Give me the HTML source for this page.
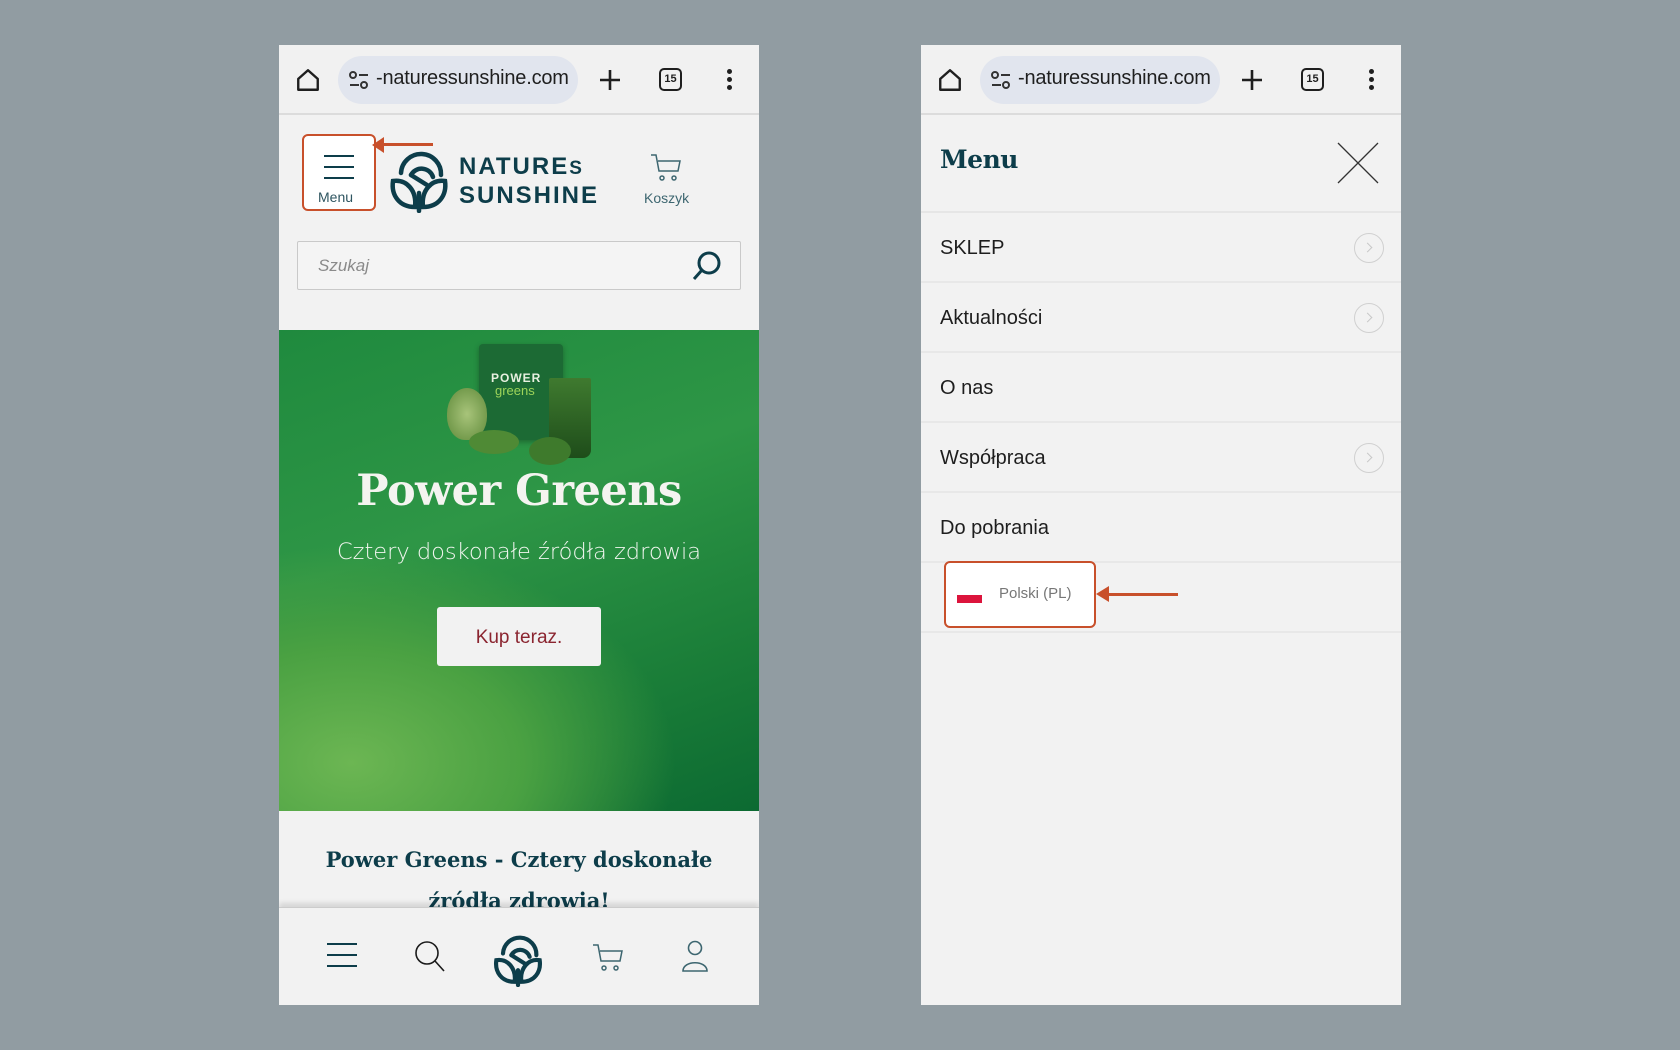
<!DOCTYPE html>
<html><head><meta charset="utf-8">
<style>
*{margin:0;padding:0;box-sizing:border-box}
body{width:1680px;height:1050px;background:#919ca2;position:relative;overflow:hidden;font-family:"Liberation Sans",sans-serif}
.ph{position:absolute;top:45px;width:480px;height:960px;background:#f2f2f2;overflow:hidden}
.abs{position:absolute}
.bar{position:absolute;left:0;top:0;width:480px;height:70px;background:#f1f1f1;border-bottom:2px solid #dcdcdc}
.pill{position:absolute;left:59px;top:11px;width:240px;height:48px;border-radius:24px;background:#e1e5ee}
.url{position:absolute;left:97px;top:22px;font-size:20px;color:#1f1f1f;letter-spacing:-0.2px}
.serif{font-family:"DejaVu Serif","Liberation Serif",serif}
.row{position:absolute;left:0;width:480px;height:70px;border-bottom:2px solid #e8e8e8}
.row span{position:absolute;left:19px;top:24px;font-size:20px;color:#1e1e1e}
.chev{position:absolute;right:17px;top:20px;width:30px;height:30px;border:1.5px solid #d0d0d0;border-radius:50%}
.chev:after{content:"";position:absolute;left:9px;top:10px;width:6px;height:6px;border-right:1px solid #c8c8c8;border-top:1px solid #c8c8c8;transform:rotate(45deg)}
</style></head><body>

<!-- LEFT PHONE -->
<div class="ph" style="left:279px">
 <div class="bar">
  <svg class="abs" style="left:16px;top:22px" width="26" height="26" viewBox="0 0 24 24"><path d="M3 11 L12 3 L21 11 V21 H3 Z" fill="none" stroke="#1f1f1f" stroke-width="2.2" stroke-linejoin="round"/></svg>
  <div class="pill"></div>
  <svg class="abs" style="left:69px;top:26px" width="22" height="18" viewBox="0 0 22 18"><circle cx="5" cy="4" r="3" fill="none" stroke="#333" stroke-width="2"/><line x1="11" y1="4" x2="20" y2="4" stroke="#333" stroke-width="2"/><line x1="2" y1="14" x2="11" y2="14" stroke="#333" stroke-width="2"/><circle cx="16" cy="14" r="3" fill="none" stroke="#333" stroke-width="2"/></svg>
  <div class="url">-naturessunshine.com</div>
  <svg class="abs" style="left:319px;top:23px" width="24" height="24" viewBox="0 0 24 24"><path d="M12 2V22M2 12H22" stroke="#1f1f1f" stroke-width="2.6"/></svg>
  <div class="abs" style="left:380px;top:23px;width:23px;height:23px;border:2.4px solid #1f1f1f;border-radius:5px;font-size:11px;font-weight:bold;text-align:center;line-height:18px;color:#1f1f1f">15</div>
  <div class="abs" style="left:448px;top:24px;width:5px;height:5px;border-radius:50%;background:#1f1f1f;box-shadow:0 8px 0 #1f1f1f,0 16px 0 #1f1f1f"></div>
 </div>
 <div class="abs" style="left:23px;top:89px;width:74px;height:77px;border:2.5px solid #c8502b;border-radius:6px;background:#fff"></div>
 <div class="abs" style="left:45px;top:110px;width:30px;height:2px;background:#0d3d4a;box-shadow:0 11px 0 #0d3d4a,0 22px 0 #0d3d4a"></div>
 <div class="abs" style="left:39px;top:144px;font-size:14px;color:#2e5560">Menu</div>
 <div class="abs" style="left:104px;top:98px;width:50px;height:3px;background:#c8502b"></div>
 <div class="abs" style="left:93px;top:92px;width:0;height:0;border-top:8px solid transparent;border-bottom:8px solid transparent;border-right:12px solid #c8502b"></div>
 <svg class="abs" style="left:110px;top:106px" width="60" height="62" viewBox="0 0 60 62" fill="none" stroke="#0d3d4a" stroke-width="4.5" stroke-linecap="round">
  <path d="M12 22 A20 20 0 0 1 52 24"/><path d="M22 24 A12 12 0 0 1 44 26"/><path d="M22 24 L38 34"/>
  <path d="M4 30 C18 28 28 40 26 56 C10 56 2 44 4 30Z"/><path d="M56 30 C42 28 32 40 34 56 C50 56 58 44 56 30Z"/><path d="M30 42 V60"/>
 </svg>
 <div class="abs" style="left:180px;top:108px;font-size:24px;font-weight:bold;color:#0d3d4a;letter-spacing:2px;line-height:27px">NATURE<span style="font-size:19px">S</span><br>SUNSHINE</div>
 <svg class="abs" style="left:371px;top:108px" width="32" height="30" viewBox="0 0 32 30" fill="none" stroke="#3d6670" stroke-width="1.5"><path d="M1 2H6L9 18H28L30 8H8"/><circle cx="12" cy="25" r="2"/><circle cx="24" cy="25" r="2"/></svg>
 <div class="abs" style="left:365px;top:145px;font-size:14px;color:#3d6670">Koszyk</div>
 <div class="abs" style="left:18px;top:196px;width:444px;height:49px;border:1.5px solid #c9c9c9;border-radius:2px;background:#f4f4f4"></div>
 <div class="abs" style="left:39px;top:211px;font-size:17px;font-style:italic;color:#8a8a8a">Szukaj</div>
 <svg class="abs" style="left:412px;top:205px" width="32" height="32" viewBox="0 0 32 32" fill="none" stroke="#0d3d4a" stroke-width="3"><circle cx="18" cy="13" r="10"/><path d="M11 20L3 29"/></svg>
 <div class="abs" style="left:0;top:285px;width:480px;height:481px;background:radial-gradient(ellipse 90% 60% at 15% 90%,#6cb653 0%,#4aa142 40%,rgba(40,140,60,0) 75%),linear-gradient(160deg,#1f8a3e 0%,#2e9646 40%,#1a7d38 75%,#0c6a32 100%)"></div>
 <div class="abs" style="left:200px;top:299px;width:84px;height:96px;background:#1c6a34;border-radius:4px;box-shadow:0 2px 6px rgba(0,0,0,.3)"></div>
 <div class="abs" style="left:212px;top:326px;font-size:12px;font-weight:bold;color:#e8f0e0;letter-spacing:1px">POWER</div>
 <div class="abs" style="left:216px;top:338px;font-size:13px;color:#9ed45a">greens</div>
 <div class="abs" style="left:270px;top:333px;width:42px;height:80px;background:linear-gradient(#3f7a2f,#1e4d1a);border-radius:2px 2px 8px 8px"></div>
 <div class="abs" style="left:168px;top:343px;width:40px;height:52px;background:radial-gradient(#a8c47a,#5f8a3a);border-radius:50% 50% 45% 45%"></div>
 <div class="abs" style="left:190px;top:385px;width:50px;height:24px;background:#4f8a35;border-radius:50%"></div>
 <div class="abs" style="left:250px;top:392px;width:42px;height:28px;background:#3e7a2c;border-radius:50%"></div>
 <div class="abs serif" style="left:0;top:421px;width:480px;text-align:center;font-size:43px;font-weight:bold;color:#f4f4f0;letter-spacing:-0.5px">Power Greens</div>
 <div class="abs" style="left:0;top:494px;width:480px;text-align:center;font-size:22.5px;color:#f0f5ee;font-family:'DejaVu Sans',sans-serif;font-weight:200">Cztery doskonałe źródła zdrowia</div>
 <div class="abs" style="left:158px;top:562px;width:164px;height:59px;background:#f2f2f2;border-radius:3px"></div>
 <div class="abs" style="left:158px;top:582px;width:164px;text-align:center;font-size:19px;color:#8b2530">Kup teraz.</div>
 <div class="abs serif" style="left:0;top:794px;width:480px;text-align:center;font-size:21px;font-weight:bold;color:#0d3d4a;line-height:41px">Power Greens - Cztery doskonałe<br>źródła zdrowia!</div>
 <div class="abs" style="left:0;top:862px;width:480px;height:100px;background:#f2f2f2;border-top:1px solid #ccc;box-shadow:0 -4px 5px rgba(0,0,0,.12)"></div>
 <div class="abs" style="left:48px;top:898px;width:30px;height:2px;background:#0d3d4a;box-shadow:0 11px 0 #0d3d4a,0 22px 0 #0d3d4a"></div>
 <svg class="abs" style="left:135px;top:895px" width="32" height="34" viewBox="0 0 32 34" fill="none" stroke="#1a1a1a" stroke-width="1.6"><circle cx="13" cy="13" r="11"/><path d="M21 21L30 31"/></svg>
 <svg class="abs" style="left:214px;top:890px" width="50" height="52" viewBox="0 0 60 62" fill="none" stroke="#0d3d4a" stroke-width="5" stroke-linecap="round">
  <path d="M12 22 A20 20 0 0 1 52 24"/><path d="M22 24 A12 12 0 0 1 44 26"/><path d="M22 24 L38 34"/>
  <path d="M4 30 C18 28 28 40 26 56 C10 56 2 44 4 30Z"/><path d="M56 30 C42 28 32 40 34 56 C50 56 58 44 56 30Z"/><path d="M30 42 V60"/>
 </svg>
 <svg class="abs" style="left:313px;top:898px" width="32" height="30" viewBox="0 0 32 30" fill="none" stroke="#3d6670" stroke-width="1.5"><path d="M1 2H6L9 18H28L30 8H8"/><circle cx="12" cy="25" r="2"/><circle cx="24" cy="25" r="2"/></svg>
 <svg class="abs" style="left:402px;top:895px" width="28" height="34" viewBox="0 0 28 34" fill="none" stroke="#3d6670" stroke-width="1.6"><circle cx="14" cy="8" r="6.5"/><path d="M2 31 C2 20 26 20 26 31 Z"/></svg>
</div>

<!-- RIGHT PHONE -->
<div class="ph" style="left:921px">
 <div class="bar">
  <svg class="abs" style="left:16px;top:22px" width="26" height="26" viewBox="0 0 24 24"><path d="M3 11 L12 3 L21 11 V21 H3 Z" fill="none" stroke="#1f1f1f" stroke-width="2.2" stroke-linejoin="round"/></svg>
  <div class="pill"></div>
  <svg class="abs" style="left:69px;top:26px" width="22" height="18" viewBox="0 0 22 18"><circle cx="5" cy="4" r="3" fill="none" stroke="#333" stroke-width="2"/><line x1="11" y1="4" x2="20" y2="4" stroke="#333" stroke-width="2"/><line x1="2" y1="14" x2="11" y2="14" stroke="#333" stroke-width="2"/><circle cx="16" cy="14" r="3" fill="none" stroke="#333" stroke-width="2"/></svg>
  <div class="url">-naturessunshine.com</div>
  <svg class="abs" style="left:319px;top:23px" width="24" height="24" viewBox="0 0 24 24"><path d="M12 2V22M2 12H22" stroke="#1f1f1f" stroke-width="2.6"/></svg>
  <div class="abs" style="left:380px;top:23px;width:23px;height:23px;border:2.4px solid #1f1f1f;border-radius:5px;font-size:11px;font-weight:bold;text-align:center;line-height:18px;color:#1f1f1f">15</div>
  <div class="abs" style="left:448px;top:24px;width:5px;height:5px;border-radius:50%;background:#1f1f1f;box-shadow:0 8px 0 #1f1f1f,0 16px 0 #1f1f1f"></div>
 </div>
 <div class="abs serif" style="left:19px;top:100px;font-size:25px;font-weight:bold;color:#0d3d4a;letter-spacing:-0.5px">Menu</div>
 <svg class="abs" style="left:416px;top:97px" width="42" height="42" viewBox="0 0 42 42" stroke="#333" stroke-width="1.3"><path d="M1 1L41 41M41 1L1 41"/></svg>
 <div class="abs" style="left:0;top:166px;width:480px;height:2px;background:#e6e6e6"></div>
 <div class="row" style="top:168px"><span>SKLEP</span><div class="chev"></div></div>
 <div class="row" style="top:238px"><span>Aktualności</span><div class="chev"></div></div>
 <div class="row" style="top:308px"><span>O nas</span></div>
 <div class="row" style="top:378px"><span>Współpraca</span><div class="chev"></div></div>
 <div class="row" style="top:448px"><span>Do pobrania</span></div>
 <div class="row" style="top:518px"></div>
 <div class="abs" style="left:23px;top:516px;width:152px;height:67px;border:2.5px solid #c8502b;border-radius:6px;background:#fff"></div>
 <div class="abs" style="left:36px;top:550px;width:25px;height:8px;background:#dc143c"></div>
 <div class="abs" style="left:78px;top:540px;font-size:15px;color:#777">Polski (PL)</div>
 <div class="abs" style="left:188px;top:548px;width:69px;height:3px;background:#c8502b"></div>
 <div class="abs" style="left:175px;top:541px;width:0;height:0;border-top:8px solid transparent;border-bottom:8px solid transparent;border-right:13px solid #c8502b"></div>
</div>
</body></html>
